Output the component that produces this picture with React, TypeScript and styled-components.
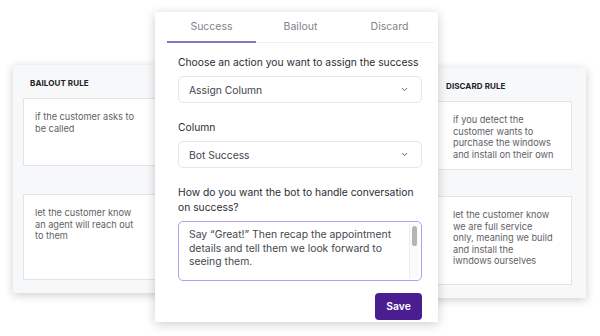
import styled, { createGlobalStyle } from 'styled-components'

const GlobalStyle = createGlobalStyle`
  html, body {
    margin: 0;
    padding: 0;
    background: #ffffff;
    font-family: Inter, "Noto Sans", sans-serif;
  }
`

const Stage = styled.div`
  width: 600px;
  height: 336px;
  display: flex;
  align-items: flex-start;
  overflow: hidden;
`

const SidePanel = styled.div<{ top: number; width: number; height: number; left: number }>`
  margin-top: ${p => p.top}px;
  margin-left: ${p => p.left}px;
  width: ${p => p.width}px;
  height: ${p => p.height}px;
  box-sizing: border-box;
  background: #f7f8fa;
  box-shadow: 0 2px 9px rgba(0, 0, 0, 0.2);
  display: flex;
  flex-direction: column;
  flex-shrink: 0;
  padding: 13px 0 0;
`

const SideTitle = styled.div<{ indent: number }>`
  font-size: 8px;
  font-weight: 700;
  color: #222;
  letter-spacing: 0.1px;
  padding-left: ${p => p.indent}px;
  margin-bottom: 10px;
`

const RuleBox = styled.div<{ inset: number; trail: number; pad: number; height: number; gap: number }>`
  margin: 0 ${p => p.trail}px ${p => p.gap}px ${p => p.inset}px;
  height: ${p => p.height}px;
  box-sizing: border-box;
  background: #ffffff;
  border: 1px solid #e2e4e8;
  padding: 12px 6px 0 ${p => p.pad}px;
  font-size: 9.2px;
  line-height: 11.6px;
  color: #5f6166;
`

const Card = styled.div`
  position: relative;
  z-index: 2;
  margin-top: 12px;
  margin-left: -20px;
  width: 283px;
  height: 310px;
  flex-shrink: 0;
  box-sizing: border-box;
  background: #ffffff;
  box-shadow: 0 2px 10px rgba(0, 0, 0, 0.2);
  display: flex;
  flex-direction: column;
  padding: 0 4px 0 12px;
`

const Tabs = styled.div`
  display: flex;
  border-bottom: 1px solid #f0f0f3;
  height: 30px;
`

const Tab = styled.div<{ active?: boolean }>`
  flex: 1;
  display: flex;
  align-items: center;
  justify-content: center;
  font-size: 10.5px;
  color: #80838b;
  margin-bottom: -1px;
  border-bottom: 2px solid ${p => (p.active ? '#8a72cc' : 'transparent')};
`

const Body = styled.div`
  display: flex;
  flex-direction: column;
  padding: 12px 12px 0 11px;
`

const Label = styled.div`
  font-size: 10.3px;
  line-height: 15px;
  color: #2b2d33;
  margin-bottom: 6px;
`

const Select = styled.div`
  height: 27px;
  box-sizing: border-box;
  border: 1px solid #e5e7eb;
  border-radius: 5px;
  display: flex;
  align-items: center;
  justify-content: space-between;
  padding: 0 12px 0 10px;
  font-size: 10.3px;
  color: #3f434b;
  margin-bottom: 17px;
`

const TextArea = styled.div`
  position: relative;
  height: 60px;
  box-sizing: border-box;
  border: 1.5px solid #b79cf4;
  border-radius: 5px;
  padding: 6px 18px 0 10px;
  font-size: 10.4px;
  line-height: 13.5px;
  color: #44474e;
`

const ScrollTrack = styled.div`
  position: absolute;
  right: 3px;
  top: 2px;
  bottom: 2px;
  width: 8px;
  border-left: 1px solid #eeeeee;
  background: #fafafa;
`

const ScrollThumb = styled.div`
  width: 5px;
  height: 20px;
  margin: 2px 0 0 1.5px;
  border-radius: 3px;
  background: #b5b5b8;
`

const Footer = styled.div`
  display: flex;
  justify-content: flex-end;
  margin-top: 12px;
`

const SaveButton = styled.button`
  width: 47px;
  height: 27px;
  border: none;
  border-radius: 4px;
  background: #4a1d91;
  color: #ffffff;
  font-family: Inter, "Noto Sans", sans-serif;
  font-size: 10.4px;
  font-weight: 600;
  padding: 0;
`

const Chevron = () => (
  <svg width="9" height="9" viewBox="0 0 24 24" fill="none" stroke="#555" strokeWidth="2.5" strokeLinecap="round" strokeLinejoin="round">
    <path d="m6 9 6 6 6-6" />
  </svg>
)

export default function App() {
  return (
    <Stage>
      <GlobalStyle />
      <SidePanel top={65} left={13} width={162} height={228}>
        <SideTitle indent={17}>BAILOUT RULE</SideTitle>
        <RuleBox inset={10} trail={0} pad={11} height={68} gap={28}>
          if the customer asks to<br />be called
        </RuleBox>
        <RuleBox inset={10} trail={0} pad={11} height={86} gap={0}>
          let the customer know<br />an agent will reach out<br />to them
        </RuleBox>
      </SidePanel>
      <Card>
        <Tabs>
          <Tab active>Success</Tab>
          <Tab>Bailout</Tab>
          <Tab>Discard</Tab>
        </Tabs>
        <Body>
          <Label>Choose an action you want to assign the success</Label>
          <Select>Assign Column<Chevron /></Select>
          <Label>Column</Label>
          <Select>Bot Success<Chevron /></Select>
          <Label>How do you want the bot to handle conversation on success?</Label>
          <TextArea>
            Say “Great!” Then recap the appointment details and tell them we look forward to seeing them.
            <ScrollTrack><ScrollThumb /></ScrollTrack>
          </TextArea>
          <Footer><SaveButton>Save</SaveButton></Footer>
        </Body>
      </Card>
      <SidePanel top={68} left={-13} width={161} height={230}>
        <SideTitle indent={21}>DISCARD RULE</SideTitle>
        <RuleBox inset={0} trail={14} pad={27} height={69} gap={26}>
          if you detect the<br />customer wants to<br />purchase the windows<br />and install on their own
        </RuleBox>
        <RuleBox inset={0} trail={14} pad={27} height={89} gap={0}>
          let the customer know<br />we are full service<br />only, meaning we build<br />and install the<br />iwndows ourselves
        </RuleBox>
      </SidePanel>
    </Stage>
  )
}
